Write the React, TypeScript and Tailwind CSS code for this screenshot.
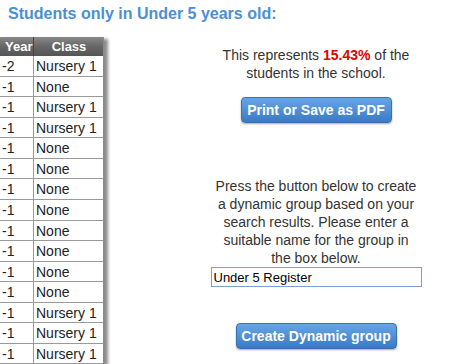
const ROWS: [string, string][] = [
  ['-2', 'Nursery 1'],
  ['-1', 'None'],
  ['-1', 'Nursery 1'],
  ['-1', 'Nursery 1'],
  ['-1', 'None'],
  ['-1', 'None'],
  ['-1', 'None'],
  ['-1', 'None'],
  ['-1', 'None'],
  ['-1', 'None'],
  ['-1', 'None'],
  ['-1', 'None'],
  ['-1', 'Nursery 1'],
  ['-1', 'Nursery 1'],
  ['-1', 'Nursery 1'],
]

export default function App() {
  return (
    <div className="w-[454px] h-[364px] overflow-hidden bg-white font-['Liberation_Sans',Arial,sans-serif] text-[#333]">
      {/* Title */}
      <h1 className="pl-[8px] pt-[5px] h-[37px] text-[16px] leading-[18px] font-bold text-[#4a8fd6]">
        Students only in Under 5 years old:
      </h1>

      <div className="flex">
        {/* Results table */}
        <div className="w-[104px] shrink-0 shadow-[4px_2px_3px_rgba(0,0,0,0.45)] border-r border-[#8a8a8a]">
          <div className="grid grid-cols-[34px_70px] h-[19px] bg-gradient-to-b from-[#8a8a8a] via-[#666] to-[#555] text-white font-bold text-[13px] leading-[19px]">
            <div className="pl-[5px] border-r border-[#444]">Year</div>
            <div className="text-center">Class</div>
          </div>
          {ROWS.map(([year, cls], i) => (
            <div key={i} className="grid grid-cols-[34px_70px] h-[20.57px] border-b border-[#9a9a9a] text-[14px] leading-[20px] text-[#222]">
              <div className="pl-[2px] border-r border-[#9a9a9a]">{year}</div>
              <div className="pl-[2px]">{cls}</div>
            </div>
          ))}
        </div>

        {/* Right panel */}
        <div className="flex-1 flex justify-center pl-[78px] pr-[4px]">
          <div className="w-[208px] flex flex-col items-center text-center text-[14px] leading-[18px]">
            <p className="mt-[9px] w-[224px] shrink-0">
              This represents <span className="text-[#e00000] font-bold">15.43%</span> of the students in the school.
            </p>
            <button className="mt-[15px] w-[151px] h-[26px] rounded-[4px] border border-[#3a70b0] bg-gradient-to-b from-[#66a6e6] to-[#3a7ac4] text-white font-bold text-[14px] shadow-[0_1px_2px_rgba(0,0,0,0.35)]">
              Print or Save as PDF
            </button>
            <p className="mt-[54px]">
              Press the button below to create a dynamic group based on your search results. Please enter a suitable name for the group in the box below.
            </p>
            <input
              defaultValue="Under 5 Register"
              className="w-[211px] h-[20px] shrink-0 border border-[#7d9fc9] px-[2px] text-[13px] text-black outline-none"
            />
            <button className="mt-[36px] w-[161px] h-[26px] rounded-[4px] border border-[#3a70b0] bg-gradient-to-b from-[#66a6e6] to-[#3a7ac4] text-white font-bold text-[14px] shadow-[0_1px_2px_rgba(0,0,0,0.35)]">
              Create Dynamic group
            </button>
          </div>
        </div>
      </div>
    </div>
  )
}
